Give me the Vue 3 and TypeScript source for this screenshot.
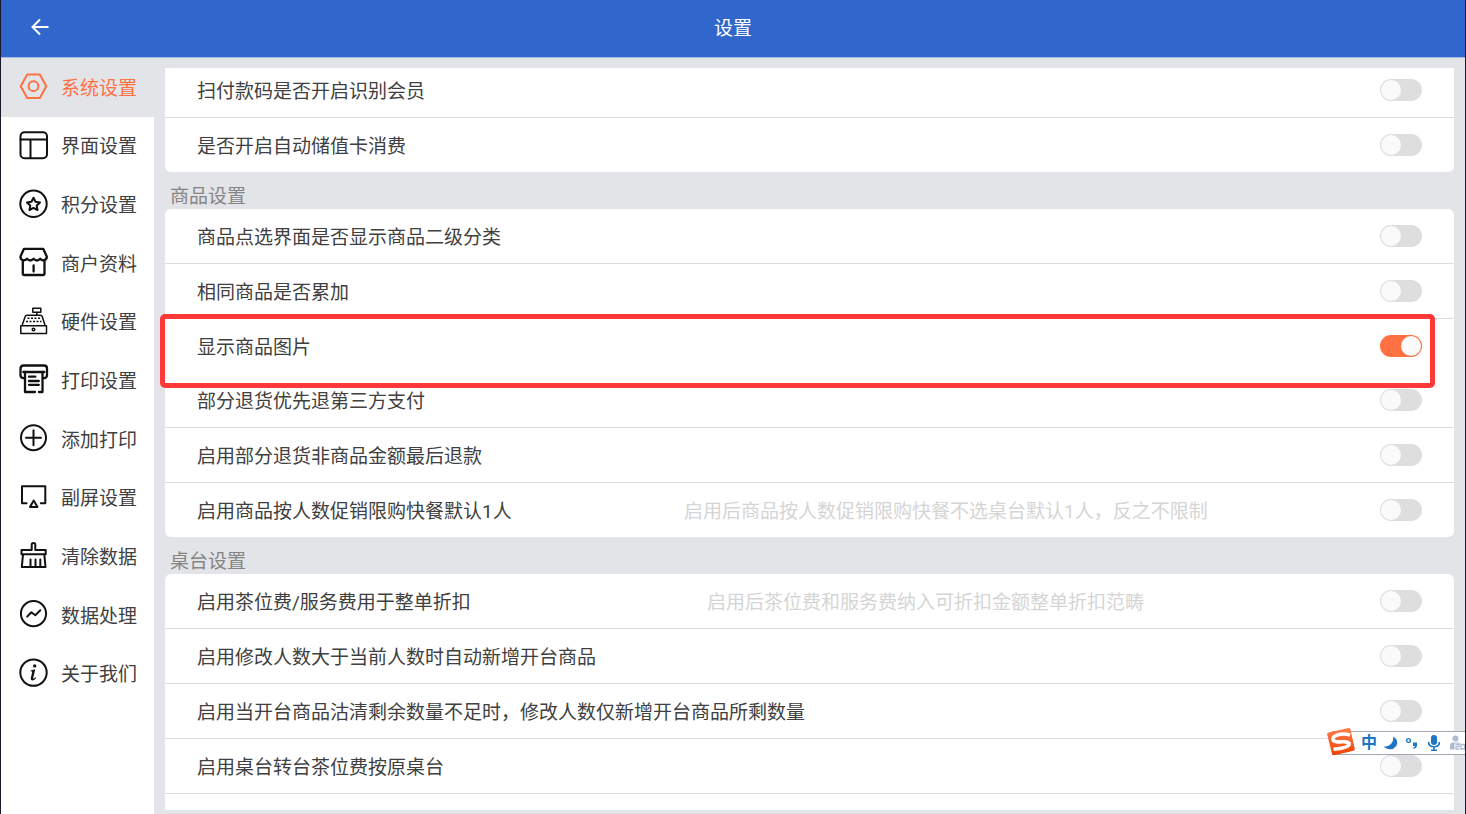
<script setup lang="ts">
import { ref } from 'vue'

interface SettingRow {
  id: string
  label: string
  hint?: string
  on: boolean
  marked?: boolean
}

interface SettingGroup {
  title?: string
  rows: SettingRow[]
}

interface MenuItem {
  id: string
  label: string
}

const menu: MenuItem[] = [
  { id: 'system', label: '系统设置' },
  { id: 'layout', label: '界面设置' },
  { id: 'points', label: '积分设置' },
  { id: 'shop', label: '商户资料' },
  { id: 'hardware', label: '硬件设置' },
  { id: 'print', label: '打印设置' },
  { id: 'add', label: '添加打印' },
  { id: 'screen', label: '副屏设置' },
  { id: 'clear', label: '清除数据' },
  { id: 'data', label: '数据处理' },
  { id: 'about', label: '关于我们' },
]

const active = ref('system')

const groups = ref<SettingGroup[]>([
  {
    rows: [
      { id: 'scan-member', label: '扫付款码是否开启识别会员', on: false },
      { id: 'auto-card', label: '是否开启自动储值卡消费', on: false },
    ],
  },
  {
    title: '商品设置',
    rows: [
      { id: 'second-level', label: '商品点选界面是否显示商品二级分类', on: false },
      { id: 'accumulate', label: '相同商品是否累加', on: false },
      { id: 'show-image', label: '显示商品图片', on: true, marked: true },
      { id: 'third-party', label: '部分退货优先退第三方支付', on: false },
      { id: 'non-goods', label: '启用部分退货非商品金额最后退款', on: false },
      {
        id: 'one-person',
        label: '启用商品按人数促销限购快餐默认1人',
        hint: '启用后商品按人数促销限购快餐不选桌台默认1人，反之不限制',
        on: false,
      },
    ],
  },
  {
    title: '桌台设置',
    rows: [
      {
        id: 'tea-fee',
        label: '启用茶位费/服务费用于整单折扣',
        hint: '启用后茶位费和服务费纳入可折扣金额整单折扣范畴',
        on: false,
      },
      { id: 'add-people', label: '启用修改人数大于当前人数时自动新增开台商品', on: false },
      { id: 'sold-out', label: '启用当开台商品沽清剩余数量不足时，修改人数仅新增开台商品所剩数量', on: false },
      { id: 'transfer', label: '启用桌台转台茶位费按原桌台', on: false },
    ],
  },
])
</script>

<template>
  <div class="app">
    <header class="topbar">
      <button class="back" type="button" aria-label="返回">
        <svg viewBox="0 0 20 20" width="20" height="20">
          <path d="M18.500 10H3M10 2.500L2.500 10l7.500 7.500" />
        </svg>
      </button>
      <h1>设置</h1>
    </header>

    <div class="body">
      <nav class="sidebar">
        <button
          v-for="item in menu"
          :key="item.id"
          type="button"
          class="menu-item"
          :class="{ active: item.id === active }"
          @click="active = item.id"
        >
          <svg class="icon" viewBox="0 0 32 32" width="32" height="32" aria-hidden="true">
            <g v-if="item.id === 'system'">
              <path d="M3.700 15.200L10.200 3.500H22.800L29.300 15.200L22.800 27H10.200Z" />
              <circle cx="16.500" cy="15.200" r="4.900" />
            </g>
            <g v-else-if="item.id === 'layout'">
              <rect x="3.500" y="2.300" width="26.500" height="26" rx="4" />
              <path d="M3.500 9.500h26.500M13.500 9.500v18.500" />
            </g>
            <g v-else-if="item.id === 'points'">
              <circle cx="16.500" cy="14.800" r="13.200" />
              <path d="M16.500 8.700L18.500 12.700L23 13.400L19.700 16.500L20.500 21L16.500 18.900L12.500 21L13.300 16.500L10 13.400L14.500 12.700Z" />
            </g>
            <g v-else-if="item.id === 'shop'" class="bold">
              <path d="M7 1.800H26.200L29.800 9.500Q30 12.800 26.500 13.300Q24.500 13.500 23.200 11.800Q20 15.200 16.600 11.800Q13.200 15.200 10 11.800Q8.500 13.500 6.500 13.300Q3.200 12.800 3.500 9.500Z" />
              <path d="M5.800 13.500V26.500Q5.800 28 7.300 28H26Q27.500 28 27.500 26.500V13.500M16.600 18.500V24.500" />
            </g>
            <g v-else-if="item.id === 'hardware'" class="thin">
              <path d="M15.800 2.300h8v3.900h-8ZM19.800 6.200v3M5.200 19L8.200 10.500Q8.600 9.200 10 9.200H23.500Q24.800 9.200 25.200 10.500L28 19M3.800 19.700h25.700v7.800H3.800Z" />
              <path d="M10.500 12.300h13M9 15.500h15.500" stroke-dasharray="2 1.500" />
              <circle cx="16.500" cy="23.500" r="1.300" />
            </g>
            <g v-else-if="item.id === 'print'" class="bold">
              <path d="M8 14.200H6.500Q3.500 14 3.500 11V4.500Q3.500 1.500 6.500 1.500H27Q30 1.500 30 4.500V11Q30 14 27 14.200H26M6.300 8h21" />
              <path d="M8 8V28H18M22 28H25.500V8M12 12.700h6.300M12 17h9.800M12 20.800h9.800" />
            </g>
            <g v-else-if="item.id === 'add'">
              <circle cx="16.500" cy="14.700" r="12.500" />
              <path d="M9 14.700h15M16.500 7.200v15" />
            </g>
            <g v-else-if="item.id === 'screen'">
              <path d="M9.500 21.300H5V4.300H28.300V21.300H23.800M16.700 18.500L20.500 25H13Z" />
            </g>
            <g v-else-if="item.id === 'clear'">
              <path d="M4.500 14.300V10H14.700V4.500Q14.700 3 16.500 3Q18.300 3 18.300 4.500V10H28.700V14.300ZM6 14.300L4.800 27H28.500L27.300 14.300M13.500 19.500V26.500M18.500 19.500V26.500M23.300 19.500V26.500" />
            </g>
            <g v-else-if="item.id === 'data'">
              <circle cx="16.500" cy="14.600" r="12.600" />
              <path d="M10.200 17.600L14.300 13.300L18.300 16.200L23.300 11.300" />
            </g>
            <g v-else>
              <circle cx="16.500" cy="14.600" r="13.200" />
              <circle class="solid" cx="17.700" cy="7.900" r="1.700" />
              <path class="solid" d="M13.500 12.500L18.300 11.300L16.300 19.500Q16 21 17 20.600L18.700 19.300L19.100 19.900Q17.200 22.500 15.300 22.500Q13.300 22.300 13.800 19.900L15.300 13.700Q14.900 13 13.500 13.300Z" />
            </g>
          </svg>
          <span>{{ item.label }}</span>
        </button>
      </nav>

      <main class="content">
        <section v-for="(group, index) in groups" :key="index" class="group">
          <h2 v-if="group.title">{{ group.title }}</h2>
          <div class="card">
            <div v-for="row in group.rows" :key="row.id" class="row" :class="{ marked: row.marked }">
              <label :for="row.id">{{ row.label }}</label>
              <p class="hint">{{ row.hint }}</p>
              <input :id="row.id" v-model="row.on" type="checkbox" class="switch" role="switch" />
            </div>
          </div>
        </section>
      </main>
    </div>

    <aside class="ime" aria-label="输入法">
      <svg class="ime-logo" viewBox="0 0 30 30" width="30" height="30" aria-hidden="true">
        <defs>
          <linearGradient id="ime-orange" x1="0" y1="0" x2="0" y2="1">
            <stop offset="0" stop-color="#ff7d4d" />
            <stop offset="1" stop-color="#ee4204" />
          </linearGradient>
        </defs>
        <path d="M2.500 5.500L22.500 1Q24 .8 24.400 2.200L28.700 21.500Q29 23.200 27.500 23.700L8.500 28.200Q6.600 28.600 6.100 26.900L1.200 7.500Q1 5.900 2.500 5.500Z" fill="url(#ime-orange)" />
        <path d="M24 8Q17 6 10.500 8.300Q5.300 10.500 7.500 13.600Q9.500 15.300 16 14.800Q23.500 14.400 23.200 17.200Q22 21 7.500 22.200" fill="none" stroke="#fff" stroke-width="3.600" />
      </svg>
      <button type="button">中</button>
      <button type="button" aria-label="月亮">
        <svg viewBox="0 0 18 18" width="18" height="18"><path d="M11.500 2.500Q17.500 7 14 12.200Q9.500 18 1.500 12.700Q11.500 12.500 11.500 2.500Z" /></svg>
      </button>
      <button type="button" aria-label="标点">
        <svg viewBox="0 0 18 18" width="18" height="18">
          <circle cx="4.500" cy="6.500" r="1.900" fill="none" stroke="#1d76c6" stroke-width="1.400" />
          <path d="M9 8.500h4v3.500Q12.500 14.500 9.500 15V13.500Q11 13 11 12H9Z" />
        </svg>
      </button>
      <button type="button" aria-label="语音">
        <svg viewBox="0 0 18 18" width="18" height="18">
          <rect x="5" y="1" width="6" height="10" rx="3" />
          <path d="M2.700 8V8.500Q2.700 12.700 8 12.700Q13.300 12.700 13.300 8.500V8M8 12.700V15.500M5 16.200h6" fill="none" stroke="#1d76c6" stroke-width="1.600" />
        </svg>
      </button>
      <button type="button" aria-label="账户" class="account">
        <svg viewBox="0 0 18 18" width="18" height="18">
          <circle cx="7.500" cy="4.500" r="3" />
          <path d="M2 15.500V11.500Q2 8.500 5 8.500H10Q12 8.500 13 9.500H6.500V15.500Z" />
          <path d="M7.500 10.500H11V12.700H8V15H11.500M13 10.500H16.500V15H13Z" fill="none" stroke="#aebbd2" stroke-width="1.300" />
        </svg>
      </button>
    </aside>
  </div>
</template>

<style>
body {
  margin: 0;
  overflow: hidden;
}
</style>

<style scoped>
.app {
  position: relative;
  display: flex;
  flex-direction: column;
  box-sizing: border-box;
  height: 100vh;
  overflow: hidden;
  border-left: 1px solid #181a29;
  border-right: 1px solid #181a29;
  background: #e3e4e8;
  color: #404040;
  font-family: Roboto, "Noto Sans CJK SC", sans-serif;
  font-size: 19px;
  line-height: 28px;
}

button {
  margin: 0;
  padding: 0;
  border: 0;
  background: none;
  color: inherit;
  font: inherit;
}

.topbar {
  display: grid;
  grid-template-columns: 77px 1fr 77px;
  align-items: center;
  flex: none;
  height: 57px;
  border-bottom: 1px solid #a5b9e4;
  background: #3166cc;
  color: #fff;
}

.back {
  display: flex;
  justify-content: center;
  padding-bottom: 3px;
}

.back svg {
  fill: none;
  stroke: #fff;
  stroke-width: 2;
}

h1 {
  margin: 0;
  font-size: 19px;
  font-weight: 400;
  text-align: center;
}

.body {
  display: flex;
  flex: 1;
  min-height: 0;
}

.sidebar {
  display: grid;
  grid-template-rows: repeat(11, 1fr);
  flex: none;
  box-sizing: border-box;
  width: 153px;
  height: 645px;
  box-shadow: 0 200px 0 #fff;
  background: #fff;
}

.menu-item {
  display: flex;
  align-items: center;
  gap: 12px;
  padding-left: 16px;
}

.menu-item span {
  padding-top: 3px;
}

.menu-item.active {
  background: #e3e4e8;
  color: #ff7043;
}

.icon {
  flex: none;
  fill: none;
  stroke: #111;
  stroke-width: 2;
  stroke-linejoin: round;
  stroke-linecap: round;
}

.active .icon {
  stroke: #ff7043;
}

.icon .thin {
  stroke-width: 1.5;
  stroke-linecap: butt;
}

.icon .bold {
  stroke-width: 2.3;
}

.icon .solid {
  fill: #111;
  stroke: none;
}

.content {
  flex: 1;
  min-width: 0;
  margin: 10px 0 4px;
  padding: 0 11px;
  overflow: hidden;
}

h2 {
  box-sizing: border-box;
  height: 37px;
  margin: 0;
  padding: 13px 5px 0;
  color: #858585;
  font-size: 19px;
  font-weight: 400;
  line-height: 24px;
}

.card {
  border-radius: 6px;
  background: #fff;
}

.group:first-child .card {
  margin-top: -5px;
}

.group:last-child .card {
  padding-bottom: 40px;
}

.row {
  position: relative;
  display: flex;
  align-items: center;
  box-sizing: border-box;
  height: 55px;
  padding: 0 32px;
  border-bottom: 1px solid #dddddf;
}

.row label,
.hint {
  padding-top: 4px;
}

.row.marked {
  height: 54px;
  border-bottom: 0;
}

.row.marked::after {
  content: "";
  position: absolute;
  inset: -5px 19px -15px -5px;
  z-index: 1;
  border: 5px solid #ff3838;
  border-radius: 5px;
  pointer-events: none;
}

.group:not(:last-child) .row:last-child {
  height: 54px;
  border-bottom: 0;
}

.hint {
  flex: 1;
  margin: 0;
  color: #d5d5d5;
  text-align: center;
}

.switch {
  flex: none;
  display: flex;
  box-sizing: border-box;
  width: 42px;
  height: 22px;
  margin: 0;
  padding: 1px;
  appearance: none;
  border-radius: 11px;
  background: #dedede;
}

.switch::before {
  content: "";
  width: 20px;
  height: 20px;
  border-radius: 10px;
  background: #fafafa;
}

.switch:checked {
  justify-content: flex-end;
  background: #ff7043;
}

.ime {
  position: absolute;
  right: -1px;
  bottom: 59px;
  z-index: 2;
  display: flex;
  align-items: center;
  gap: 4px;
  box-sizing: border-box;
  width: 134px;
  height: 24px;
  border: solid #a3a9b3;
  border-width: 1px 0;
  background: #fff;
  color: #1d76c6;
  font-size: 16px;
  font-weight: 700;
  line-height: 22px;
}

.ime-logo {
  flex: none;
  margin: 0 0 2px -6px;
}

.ime button {
  display: flex;
  flex: none;
  justify-content: center;
  width: 18px;
}

.ime button svg {
  flex: none;
  fill: #1d76c6;
}

.ime .account svg {
  fill: #aebbd2;
}
</style>
